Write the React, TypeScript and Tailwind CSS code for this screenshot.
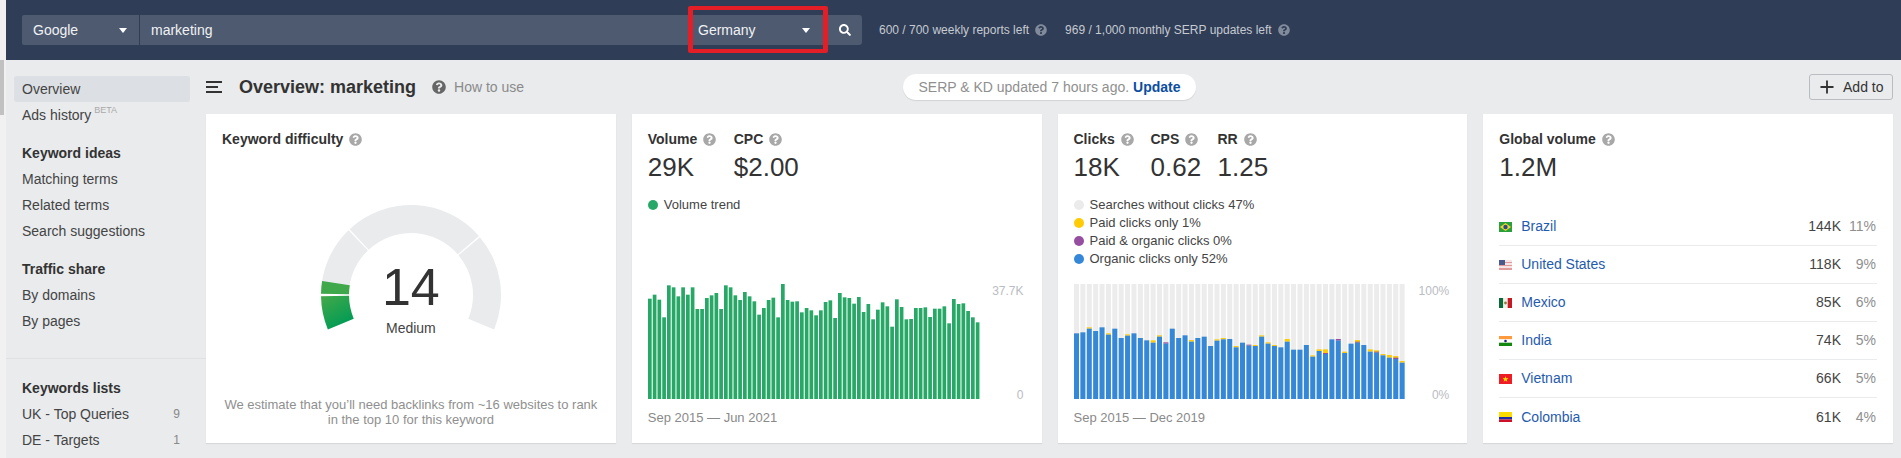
import { FaQuestionCircle, FaSearch } from "react-icons/fa";
import { Plus } from "lucide-react";

const volumeTops = [212,200,215,268,172,178,205,178,200,178,243,243,210,202,195,243,172,178,202,216,192,205,220,260,240,216,209,268,168,216,221,220,253,240,247,262,247,222,217,270,195,208,210,227,207,252,228,274,245,223,235,296,214,237,274,273,240,240,238,267,242,242,235,286,213,228,226,249,268,283];

// [blue top, yellow top, purple top], 0 = not there
const clickTops = [[460,0,0],[457,0,0],[446,442,0],[453,0,0],[442,0,0],[464,460,0],[446,0,0],[474,0,0],[467,463,0],[460,0,0],[474,0,0],[481,0,0],[488,481,0],[470,466,0],[491,0,487],[446,0,0],[474,0,0],[466,0,0],[485,480,0],[474,0,0],[470,0,0],[498,0,0],[482,478,0],[478,474,0],[477,0,0],[502,498,0],[488,0,0],[497,0,494],[498,495,0],[470,466,0],[491,487,0],[498,495,0],[502,0,0],[485,477,0],[509,0,0],[509,0,0],[495,0,0],[530,526,0],[513,508,0],[522,508,519],[478,0,0],[482,0,477],[519,515,0],[491,0,0],[488,480,485],[495,0,0],[515,508,0],[518,511,515],[526,522,0],[533,525,0],[537,528,533],[548,543,0]];

const countries = [
  { name: "Brazil", value: "144K", pct: "11%", flag: "br" },
  { name: "United States", value: "118K", pct: "9%", flag: "us" },
  { name: "Mexico", value: "85K", pct: "6%", flag: "mx" },
  { name: "India", value: "74K", pct: "5%", flag: "in" },
  { name: "Vietnam", value: "66K", pct: "5%", flag: "vn" },
  { name: "Colombia", value: "61K", pct: "4%", flag: "co" },
];

function Flag({ code }: { code: string }) {
  return (
    <svg width="13" height="10" viewBox="0 0 13 10" className="shrink-0">
      {code === "br" && (
        <>
          <rect width="13" height="10" fill="#2aa03c" />
          <polygon points="6.5,1 12,5 6.5,9 1,5" fill="#f2d52a" />
          <circle cx="6.5" cy="5" r="2.2" fill="#2b4a8e" />
        </>
      )}
      {code === "us" && (
        <>
          <rect width="13" height="10" fill="#f7e4e4" />
          <rect y="2" width="13" height="1" fill="#e39a9a" />
          <rect y="5" width="13" height="1" fill="#e39a9a" />
          <rect y="8" width="13" height="2" fill="#e39a9a" />
          <rect width="6" height="5" fill="#4a5a8c" />
        </>
      )}
      {code === "mx" && (
        <>
          <rect width="4.3" height="10" fill="#0b6b38" />
          <rect x="4.3" width="4.4" height="10" fill="#f4f1ea" />
          <rect x="8.7" width="4.3" height="10" fill="#c41a24" />
          <circle cx="6.5" cy="5" r="1.4" fill="#8f7a3e" />
        </>
      )}
      {code === "in" && (
        <>
          <rect width="13" height="3.4" fill="#ff9a3d" />
          <rect y="3.4" width="13" height="3.3" fill="#ffffff" />
          <rect y="6.7" width="13" height="3.3" fill="#12880f" />
          <circle cx="6.5" cy="5" r="1.3" fill="#1a237e" />
        </>
      )}
      {code === "vn" && (
        <>
          <rect width="13" height="10" fill="#ee1c25" />
          <polygon points="6.5,2.2 7.3,4.3 9.5,4.3 7.7,5.7 8.4,7.8 6.5,6.5 4.6,7.8 5.3,5.7 3.5,4.3 5.7,4.3" fill="#ffe000" />
        </>
      )}
      {code === "co" && (
        <>
          <rect width="13" height="5" fill="#fcdc00" />
          <rect y="5" width="13" height="2.5" fill="#1c2fa8" />
          <rect y="7.5" width="13" height="2.5" fill="#ce1126" />
        </>
      )}
    </svg>
  );
}

function Help({ size = 13, color = "text-[#a8a8a8]" }: { size?: number; color?: string }) {
  return <FaQuestionCircle size={size} className={`shrink-0 ${color}`} />;
}

function Caret() {
  return (
    <svg width="8" height="5" viewBox="0 0 8 5" className="shrink-0">
      <polygon points="0,0 8,0 4,5" fill="#ffffff" />
    </svg>
  );
}

// clockwise degrees from the left horizontal, centre 90,90 of the gauge box
function segment(from: number, to: number) {
  const R = 90;
  const r = 62;
  const point = (radius: number, deg: number) => {
    const a = (deg * Math.PI) / 180;
    return `${(90 - radius * Math.cos(a)).toFixed(2)} ${(90 - radius * Math.sin(a)).toFixed(2)}`;
  };
  return `M${point(R, from)} A${R} ${R} 0 0 1 ${point(R, to)} L${point(r, to)} A${r} ${r} 0 0 0 ${point(r, from)} Z`;
}

function Gauge() {
  return (
    <div className="relative mx-auto mt-[56px] h-[130px] w-[180px]">
      <svg width="180" height="130" viewBox="0 0 180 130">
        <defs>
          <linearGradient id="kd" x1="0" y1="0.1" x2="0.5" y2="1">
            <stop offset="0" stopColor="#3fa84a" />
            <stop offset="1" stopColor="#009b55" />
          </linearGradient>
        </defs>
        <path d={segment(0.8, 46)} fill="#e9ebed" />
        <path d={segment(47, 139)} fill="#e9ebed" />
        <path d={segment(140, 202.5)} fill="#e9ebed" />
        <path d={segment(-22.5, -0.8)} fill="url(#kd)" />
        <path d={segment(0.8, 9)} fill="#3fa84a" />
      </svg>
      <div className="absolute left-0 right-0 top-[56px] text-center text-[52px] leading-[52px] text-[#333333]">14</div>
      <div className="absolute left-0 right-0 top-[114px] text-center text-[14px] leading-[18px] text-[#444444]">Medium</div>
    </div>
  );
}

function Metric({ label, value, width }: { label: string; value: string; width: string }) {
  return (
    <div className={width}>
      <div className="flex items-center gap-[6px] text-[14px] font-bold leading-[19px] text-[#333333]">
        {label}
        <Help />
      </div>
      <div className="mt-[3px] text-[26px] leading-[30px] text-[#333333]">{value}</div>
    </div>
  );
}

function Legend({ color, text }: { color: string; text: string }) {
  return (
    <div className="flex h-[18px] items-center gap-[6px] text-[13px] text-[#444444]">
      <span className={`h-[10px] w-[10px] rounded-full ${color}`} />
      {text}
    </div>
  );
}

function ChartLabels({ top, bottom }: { top: string; bottom: string }) {
  return (
    <div className="flex h-[118px] flex-1 flex-col items-end justify-between text-[12px] leading-[14px] text-[#b9bcc2]">
      <span>{top}</span>
      <span>{bottom}</span>
    </div>
  );
}

function VolumeChart() {
  return (
    <svg width="332" height="115" viewBox="0 0 332 115" className="shrink-0">
      {volumeTops.map((y, i) => {
        const h = (513 - y) / 3;
        return <rect key={i} x={i * 4.75} y={115 - h} width="3.7" height={h} fill="#28a867" />;
      })}
    </svg>
  );
}

function ClicksChart() {
  return (
    <svg width="332" height="115" viewBox="0 0 332 115" className="shrink-0">
      {clickTops.map(([blue, yellow, purple], i) => {
        const x = i * 6.385;
        const toY = (v: number) => (v - 312) / 3;
        return (
          <g key={i}>
            <rect x={x} y="0" width="5" height="115" fill="#ececec" />
            {yellow > 0 && <rect x={x} y={toY(yellow)} width="5" height={(blue - yellow) / 3} fill="#ffcb05" />}
            {purple > 0 && <rect x={x} y={toY(purple)} width="5" height={(blue - purple) / 3} fill="#964ea0" />}
            <rect x={x} y={toY(blue)} width="5" height={(657 - blue) / 3} fill="#3587d8" />
          </g>
        );
      })}
    </svg>
  );
}

function NavItem({ label, count }: { label: string; count?: number }) {
  return (
    <div className="flex h-[26px] items-center justify-between pl-2 pr-[10px] text-[14px] text-[#444444]">
      <span>{label}</span>
      {count !== undefined && <span className="text-[12px] text-[#888888]">{count}</span>}
    </div>
  );
}

function NavTitle({ label }: { label: string }) {
  return <div className="flex h-[26px] items-center pl-2 text-[14px] font-bold text-[#333333]">{label}</div>;
}

export default function App() {
  return (
    <div className="flex h-[458px] w-[1901px] overflow-hidden bg-[#f1f1f1] font-['Liberation_Sans',Arial,sans-serif]">
      <div className="w-[6px] shrink-0 pt-[60px]">
        <div className="h-[55px] w-1 bg-[#c1c1c1]" />
      </div>

      <div className="flex min-w-0 flex-1 flex-col bg-[#e9ebed]">
        <header className="flex h-[60px] shrink-0 items-center bg-[#2f3d56] pl-4">
          <div className="flex h-[30px] w-[840px] text-[14px] text-[#f1f2f4]">
            <div className="flex w-[118px] items-center justify-between rounded-l-[2px] border-r border-[#2f3d56] bg-[#4d5a70] pl-[11px] pr-3">
              Google
              <Caret />
            </div>
            <div className="flex flex-1 items-center bg-[#4d5a70] pl-[11px]">marketing</div>
            <div className="relative flex w-[140px] items-center justify-between bg-[#4d5a70] pl-[10px] pr-[18px]">
              Germany
              <Caret />
              <div className="absolute -bottom-2 -top-[9px] left-0 right-0 rounded-[2px] border-x-[5px] border-y-[4px] border-[#e41e26]" />
            </div>
            <div className="flex w-[34px] items-center justify-center rounded-r-[3px] bg-[#4d5a70]">
              <FaSearch size={12} className="text-white" />
            </div>
          </div>
          <div className="ml-[17px] flex items-center gap-[6px] text-[12px] text-[#c6cad2]">
            600 / 700 weekly reports left
            <Help size={12} color="text-[#828b9b]" />
          </div>
          <div className="ml-[18px] flex items-center gap-[6px] text-[12px] text-[#c6cad2]">
            969 / 1,000 monthly SERP updates left
            <Help size={12} color="text-[#828b9b]" />
          </div>
        </header>

        <div className="flex min-h-0 flex-1">
          <aside className="w-[200px] shrink-0 pt-4">
            <div className="mx-2 w-[176px]">
              <div className="flex h-[26px] items-center rounded-[3px] bg-[#dcdfe3] pl-2 text-[14px] text-[#444444]">Overview</div>
              <div className="flex h-[26px] items-center pl-2 text-[14px] text-[#444444]">
                Ads history
                <span className="mb-[9px] ml-[3px] text-[9px] text-[#a9a9a9]">BETA</span>
              </div>
              <div className="mt-3">
                <NavTitle label="Keyword ideas" />
                <NavItem label="Matching terms" />
                <NavItem label="Related terms" />
                <NavItem label="Search suggestions" />
              </div>
              <div className="mt-3">
                <NavTitle label="Traffic share" />
                <NavItem label="By domains" />
                <NavItem label="By pages" />
              </div>
            </div>
            <div className="mt-6 h-px bg-[#dfe1e4]" />
            <div className="mx-2 mt-4 w-[176px]">
              <NavTitle label="Keywords lists" />
              <NavItem label="UK - Top Queries" count={9} />
              <NavItem label="DE - Targets" count={1} />
            </div>
          </aside>

          <main className="min-w-0 flex-1 pr-2 pt-[14px]">
            <div className="flex h-[26px] items-center">
              <div className="flex flex-1 items-center">
                <div className="flex h-[12px] w-4 flex-col justify-between">
                  <span className="h-[2px] w-4 bg-[#333333]" />
                  <span className="h-[2px] w-3 bg-[#333333]" />
                  <span className="h-[2px] w-4 bg-[#333333]" />
                </div>
                <h1 className="ml-[17px] text-[18px] font-bold text-[#333333]">Overview: marketing</h1>
                <span className="ml-4">
                  <Help size={14} color="text-[#666666]" />
                </span>
                <span className="ml-2 text-[14px] text-[#8a8a8a]">How to use</span>
              </div>
              <div className="flex h-[26px] items-center rounded-full bg-white px-[15px] text-[14px] text-[#8f8f8f] shadow-[0_1px_1px_rgba(0,0,0,0.1)]">
                SERP &amp; KD updated 7 hours ago.
                <span className="ml-1 font-bold text-[#0b4ea2]">Update</span>
              </div>
              <div className="flex flex-1 justify-end">
                <button className="flex h-[26px] w-[84px] items-center rounded-[3px] border border-[#b9bcc0] pl-[7px] text-[14px] text-[#333333]">
                  <Plus size={20} strokeWidth={2.2} className="shrink-0" />
                  <span className="ml-[6px]">Add to</span>
                </button>
              </div>
            </div>

            <div className="mt-[14px] grid h-[329px] grid-cols-4 gap-4">
              <section className="flex flex-col bg-white px-4 pt-4 shadow-[0_1px_1px_rgba(0,0,0,0.08)]">
                <div className="flex items-center gap-[6px] text-[14px] font-bold leading-[19px] text-[#333333]">
                  Keyword difficulty
                  <Help />
                </div>
                <Gauge />
                <p className="mt-auto pb-4 text-center text-[13px] leading-[15px] text-[#8f8f8f]">
                  We estimate that you’ll need backlinks from ~16 websites to rank
                  <br />
                  in the top 10 for this keyword
                </p>
              </section>

              <section className="flex flex-col bg-white pb-4 pl-4 pr-[18px] pt-4 shadow-[0_1px_1px_rgba(0,0,0,0.08)]">
                <div className="flex">
                  <Metric label="Volume" value="29K" width="w-[86px]" />
                  <Metric label="CPC" value="$2.00" width="w-[86px]" />
                </div>
                <div className="mt-[14px]">
                  <Legend color="bg-[#28a867]" text="Volume trend" />
                </div>
                <div className="mt-auto flex h-[115px]">
                  <VolumeChart />
                  <ChartLabels top="37.7K" bottom="0" />
                </div>
                <div className="mt-[10px] text-[13px] leading-[18px] text-[#8a8a8a]">Sep 2015 — Jun 2021</div>
              </section>

              <section className="flex flex-col bg-white pb-4 pl-4 pr-[18px] pt-4 shadow-[0_1px_1px_rgba(0,0,0,0.08)]">
                <div className="flex">
                  <Metric label="Clicks" value="18K" width="w-[77px]" />
                  <Metric label="CPS" value="0.62" width="w-[67px]" />
                  <Metric label="RR" value="1.25" width="w-[60px]" />
                </div>
                <div className="mt-[14px]">
                  <Legend color="bg-[#ebebeb]" text="Searches without clicks 47%" />
                  <Legend color="bg-[#ffcb05]" text="Paid clicks only 1%" />
                  <Legend color="bg-[#964ea0]" text="Paid & organic clicks 0%" />
                  <Legend color="bg-[#3587d8]" text="Organic clicks only 52%" />
                </div>
                <div className="mt-auto flex h-[115px]">
                  <ClicksChart />
                  <ChartLabels top="100%" bottom="0%" />
                </div>
                <div className="mt-[10px] text-[13px] leading-[18px] text-[#8a8a8a]">Sep 2015 — Dec 2019</div>
              </section>

              <section className="bg-white px-4 pt-4 shadow-[0_1px_1px_rgba(0,0,0,0.08)]">
                <Metric label="Global volume" value="1.2M" width="w-full" />
                <div className="mt-[26px]">
                  {countries.map((c, i) => (
                    <div
                      key={c.name}
                      className={`flex h-[38px] items-center pr-px text-[14px] ${i < countries.length - 1 ? "border-b border-[#e9ebed]" : ""}`}
                    >
                      <Flag code={c.flag} />
                      <span className="ml-[9px] flex-1 text-[#1f5bb0]">{c.name}</span>
                      <span className="text-[#444444]">{c.value}</span>
                      <span className="w-[35px] text-right text-[#8f8f8f]">{c.pct}</span>
                    </div>
                  ))}
                </div>
              </section>
            </div>
          </main>
        </div>
      </div>
    </div>
  );
}
